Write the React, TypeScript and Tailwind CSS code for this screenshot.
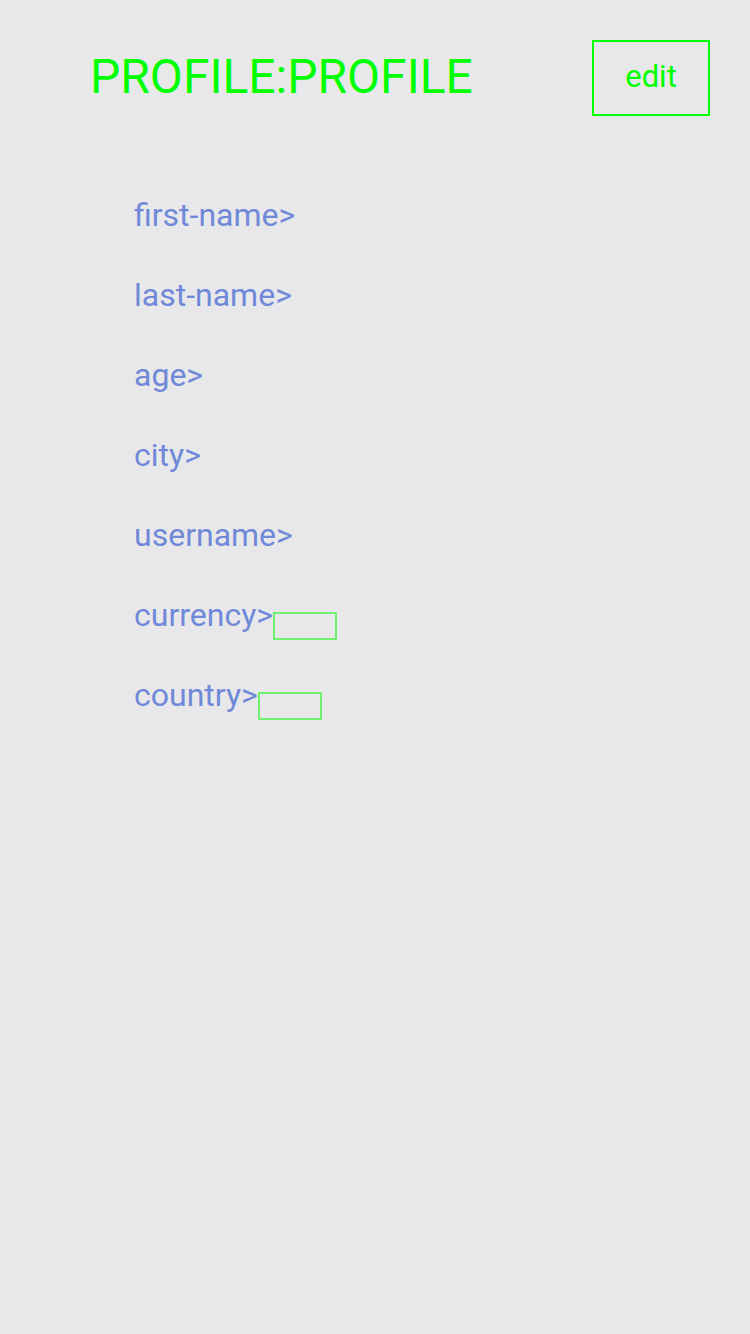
export default function App() {
  const fields = ["first-name", "last-name", "age", "city", "username"];
  return (
    <div className="min-h-[1334px] w-[750px] bg-[#e8e8ea] font-['Roboto',sans-serif]">
      <div className="flex items-start justify-between pl-[90px] pr-[40px] pt-[40px]">
        <h1 className="mt-[9px] text-[48px] leading-[56px] font-normal text-[#00ff00]">PROFILE:PROFILE</h1>
        <button className="h-[76px] w-[118px] border-2 border-[#00ff00] pb-[2px] text-[31px] text-[#00ff00]">edit</button>
      </div>
      <ul className="mt-[79px] flex flex-col gap-[40px] pl-[134px] text-[32px] leading-[40px] text-[#7088d8]">
        {fields.map((f) => (
          <li key={f}>{f}&gt;</li>
        ))}
        <li className="flex items-end">
          currency&gt;<span className="mb-[-5px] h-[28px] w-[64px] border-2 border-[#70f070]" />
        </li>
        <li className="flex items-end">
          country&gt;<span className="mb-[-5px] h-[28px] w-[64px] border-2 border-[#70f070]" />
        </li>
      </ul>
    </div>
  );
}
